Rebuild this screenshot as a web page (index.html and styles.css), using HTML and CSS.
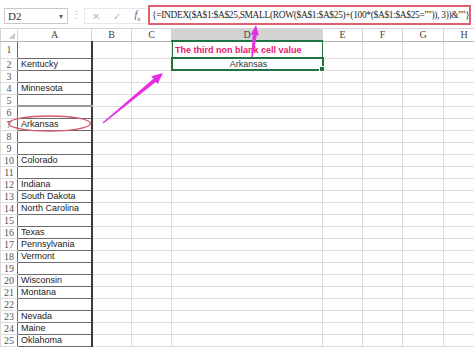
FILE: index.html
```html
<!DOCTYPE html>
<html lang="en">
<head>
  <meta charset="UTF-8" />
  <title>Third non blank cell</title>
  <link rel="stylesheet" href="styles.css">
</head>
<body>
  <!-- formula bar -->
  <div class="bar">
    <div class="namebox"><span>D2</span><span class="drop">▾</span></div>
    <div class="dots">⋮</div>
    <div class="btns"><span>✕</span><span>✓</span><span class="fx">f<sub>x</sub></span></div>
    <div class="formula">{=INDEX($A$1:$A$25,SMALL(ROW($A$1:$A$25)+(100*($A$1:$A$25="")), 3))&amp;""}</div>
  </div>

  <!-- grid -->
  <table class="sheet">
    <colgroup>
      <col style="width:17px"><col style="width:74px"><col style="width:40px"><col style="width:40px">
      <col style="width:151px"><col style="width:40px"><col style="width:40px"><col style="width:41px"><col style="width:41px">
    </colgroup>
    <tr class="hdr"><th class="corner"></th><th>A</th><th>B</th><th>C</th><th class="on">D</th><th>E</th><th>F</th><th>G</th><th>H</th></tr>
    <tr class="r1"><th class="rn">1</th><td class="a"></td><td></td><td></td><td class="d1">The third non blank cell value</td><td></td><td></td><td></td><td></td></tr>
    <tr><th class="rn">2</th><td class="a">Kentucky</td><td></td><td></td><td class="d2">Arkansas</td><td></td><td></td><td></td><td></td></tr>
    <tr><th class="rn">3</th><td class="a"></td><td></td><td></td><td></td><td></td><td></td><td></td><td></td></tr>
    <tr><th class="rn">4</th><td class="a">Minnesota</td><td></td><td></td><td></td><td></td><td></td><td></td><td></td></tr>
    <tr><th class="rn">5</th><td class="a thick"></td><td></td><td></td><td></td><td></td><td></td><td></td><td></td></tr>
    <tr><th class="rn">6</th><td class="a"></td><td></td><td></td><td></td><td></td><td></td><td></td><td></td></tr>
    <tr><th class="rn">7</th><td class="a">Arkansas</td><td></td><td></td><td></td><td></td><td></td><td></td><td></td></tr>
    <tr><th class="rn">8</th><td class="a"></td><td></td><td></td><td></td><td></td><td></td><td></td><td></td></tr>
    <tr><th class="rn">9</th><td class="a"></td><td></td><td></td><td></td><td></td><td></td><td></td><td></td></tr>
    <tr><th class="rn">10</th><td class="a">Colorado</td><td></td><td></td><td></td><td></td><td></td><td></td><td></td></tr>
    <tr><th class="rn">11</th><td class="a"></td><td></td><td></td><td></td><td></td><td></td><td></td><td></td></tr>
    <tr><th class="rn">12</th><td class="a">Indiana</td><td></td><td></td><td></td><td></td><td></td><td></td><td></td></tr>
    <tr><th class="rn">13</th><td class="a">South Dakota</td><td></td><td></td><td></td><td></td><td></td><td></td><td></td></tr>
    <tr><th class="rn">14</th><td class="a">North Carolina</td><td></td><td></td><td></td><td></td><td></td><td></td><td></td></tr>
    <tr><th class="rn">15</th><td class="a"></td><td></td><td></td><td></td><td></td><td></td><td></td><td></td></tr>
    <tr><th class="rn">16</th><td class="a">Texas</td><td></td><td></td><td></td><td></td><td></td><td></td><td></td></tr>
    <tr><th class="rn">17</th><td class="a">Pennsylvania</td><td></td><td></td><td></td><td></td><td></td><td></td><td></td></tr>
    <tr><th class="rn">18</th><td class="a">Vermont</td><td></td><td></td><td></td><td></td><td></td><td></td><td></td></tr>
    <tr><th class="rn">19</th><td class="a"></td><td></td><td></td><td></td><td></td><td></td><td></td><td></td></tr>
    <tr><th class="rn">20</th><td class="a">Wisconsin</td><td></td><td></td><td></td><td></td><td></td><td></td><td></td></tr>
    <tr><th class="rn">21</th><td class="a">Montana</td><td></td><td></td><td></td><td></td><td></td><td></td><td></td></tr>
    <tr><th class="rn">22</th><td class="a"></td><td></td><td></td><td></td><td></td><td></td><td></td><td></td></tr>
    <tr><th class="rn">23</th><td class="a">Nevada</td><td></td><td></td><td></td><td></td><td></td><td></td><td></td></tr>
    <tr><th class="rn">24</th><td class="a">Maine</td><td></td><td></td><td></td><td></td><td></td><td></td><td></td></tr>
    <tr><th class="rn">25</th><td class="a">Oklahoma</td><td></td><td></td><td></td><td></td><td></td><td></td><td></td></tr>
    <tr><th class="rn">26</th><td></td><td></td><td></td><td></td><td></td><td></td><td></td><td></td></tr>
  </table>

  <!-- annotations drawn over the sheet -->
  <svg class="marks" width="474" height="347" viewBox="0 0 474 347">
    <ellipse cx="49.5" cy="123.5" rx="41" ry="7.5" fill="none" stroke="#d4596c" stroke-width="1.3"/>
    <polygon points="103.4,123.5 156.3,81.5 153.7,78.5 102.6,122.5" fill="#e62ee6"/>
    <polygon points="163,73 157.7,83.9 151.3,76.2" fill="#e62ee6"/>
    <polygon points="252.7,57 256.8,35.3 252.8,34.7 251.3,57" fill="#e62ee6"/>
    <polygon points="256,25 258.8,35.4 250.9,34.4" fill="#e62ee6"/>
  </svg>
</body>
</html>
```

FILE: styles.css
```css
body {
  margin: 0;
  width: 474px;
  height: 347px;
  overflow: hidden;
  position: relative;
  background: #fff;
  font-family: "Liberation Sans", Arial, sans-serif;
}

/* formula bar */
.bar {
  height: 28px;
  display: flex;
  align-items: flex-start;
}

.namebox {
  margin: 8px 0 0 4px;
  width: 64px;
  height: 16px;
  box-sizing: border-box;
  border: 1px solid #c8c8c8;
  display: flex;
  align-items: center;
  justify-content: space-between;
  padding: 0 4px 0 3px;
  font: 11px "Liberation Serif", serif;
  color: #333;
}

.drop {
  font-size: 8px;
  color: #666;
}

.dots {
  width: 16px;
  margin-top: 9px;
  text-align: center;
  color: #bbb;
  font-size: 11px;
}

.btns {
  width: 63px;
  height: 16px;
  margin-top: 8px;
  box-sizing: border-box;
  border: 1px solid #e6e6e6;
  border-right: 0;
  display: flex;
  align-items: center;
  justify-content: space-around;
  color: #bbb;
  font-size: 10px;
}

.fx {
  font: italic 10px "Liberation Serif", serif;
  color: #555;
}

.fx sub {
  font-size: 7px;
}

.formula {
  flex: 1;
  height: 20px;
  margin: 5px 3px 0 1px;
  box-sizing: border-box;
  border: 2px solid #e0606f;
  padding: 0 2px;
  font: 9.4px "Liberation Serif", serif;
  letter-spacing: -0.3px;
  line-height: 16px;
  color: #1e1e1e;
  white-space: nowrap;
  overflow: hidden;
}

/* sheet */
.sheet {
  border-collapse: collapse;
  table-layout: fixed;
  width: 484px;
  font-size: 9px;
  color: #222;
}

.sheet td,
.sheet th {
  border: 1px solid #dcdcdc;
  padding: 0 0 0 3px;
  white-space: nowrap;
  overflow: hidden;
  line-height: 10px;
}

.sheet tr {
  height: 11.7px;
}

.sheet tr.hdr {
  height: 12px;
}

.sheet tr.r1 {
  height: 17px;
}

.hdr th {
  padding: 0;
  text-align: center;
  font: normal 10px "Liberation Serif", serif;
  color: #444;
  border-color: #d5d5d5;
  border-bottom-color: #b5b5b5;
}

.hdr th.on {
  background: #d3d3d3;
  border-bottom: 2px solid #217346;
}

.hdr th.corner {
  background: linear-gradient(135deg, transparent 55%, #cdcdcd 55%) no-repeat right 2px bottom 2px / 7px 7px;
}

th.rn {
  padding: 0;
  text-align: center;
  font: normal 10px "Liberation Serif", serif;
  color: #555;
  border-right-color: #666;
}

td.a {
  border: 1px solid #6a6a6a;
  border-right: 2px solid #3a3a3a;
}

td.a.thick {
  border-bottom: 2px solid #999;
}

td.d1 {
  outline: 1px solid #217346;
  outline-offset: -1px;
  color: #e6176f;
  font-weight: bold;
}

td.d2 {
  position: relative;
  overflow: visible;
  border: 2px solid #217346;
  text-align: center;
  color: #333;
}

td.d2::after {
  content: "";
  position: absolute;
  right: -3px;
  bottom: -3px;
  width: 4px;
  height: 4px;
  background: #217346;
  border: 1px solid #fff;
}

.marks {
  position: absolute;
  left: 0;
  top: 0;
  pointer-events: none;
}
```
